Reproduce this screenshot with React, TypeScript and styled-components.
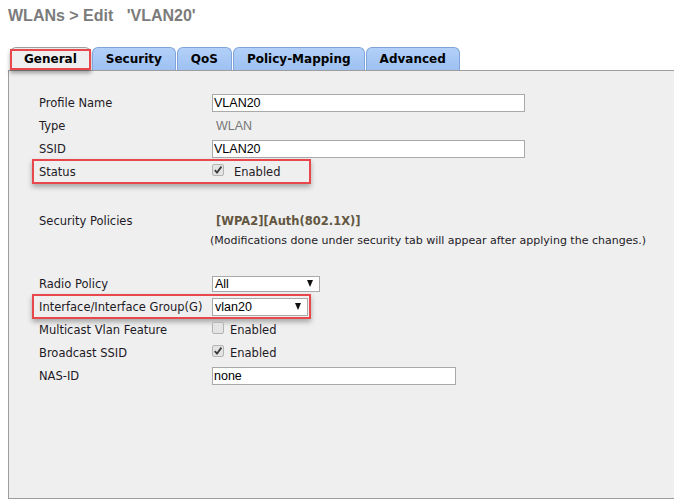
import React from 'react';
import styled, { createGlobalStyle, css } from 'styled-components';

const GlobalStyle = createGlobalStyle`
  html, body {
    margin: 0;
    padding: 0;
    background: #ffffff;
    overflow: hidden;
  }
  body {
    width: 674px;
    height: 500px;
    font-family: "DejaVu Sans", Verdana, sans-serif;
  }
`;

const Page = styled.div`
  box-sizing: border-box;
  height: 500px;
  padding: 6px 0 0 8px;
  display: flex;
  flex-direction: column;
`;

const Title = styled.h1`
  margin: 0;
  font: bold 16px/20px "Liberation Sans", Arial, sans-serif;
  color: #7b7b7b;
  white-space: pre;
`;

const TabBar = styled.div`
  display: flex;
  gap: 1px;
  height: 23px;
  margin: 21px 0 0 2px;
  position: relative;
  z-index: 1;
`;

const Tab = styled.div<{ $active?: boolean }>`
  position: relative;
  box-sizing: border-box;
  height: 23px;
  padding: 0 13px;
  border: 1px solid #7ea4da;
  border-bottom: none;
  border-radius: 6px 6px 0 0;
  background: linear-gradient(#b2d0f8, #9ec1f2);
  font: bold 12px/22px "DejaVu Sans", Verdana, sans-serif;
  color: #000;
  white-space: nowrap;
  ${(p) =>
    p.$active &&
    css`
      background: #efefef;
      border-color: #a0a0a0;
      &::after {
        content: '';
        position: absolute;
        left: -1px;
        right: -1px;
        top: 1px;
        bottom: 0;
        border: 2px solid #e8474b;
        box-shadow: 0 3px 4px rgba(0, 0, 0, 0.35);
        pointer-events: none;
      }
    `}
`;

const Panel = styled.div`
  box-sizing: border-box;
  flex: 1;
  margin-bottom: 1px;
  border: 1px solid #9d9d9d;
  border-right: none;
  background: #efefef;
  padding: 20px 0 0 30px;
`;

const Row = styled.div<{ $h?: number; $highlight?: boolean }>`
  position: relative;
  display: grid;
  grid-template-columns: 173px 1fr;
  align-items: center;
  height: ${(p) => p.$h ?? 23}px;
  ${(p) =>
    p.$highlight &&
    css`
      &::after {
        content: '';
        position: absolute;
        left: -7px;
        width: 279px;
        top: -1px;
        bottom: -1px;
        box-sizing: border-box;
        border: 2px solid #e8474b;
        box-shadow: 0 3px 5px rgba(0, 0, 0, 0.3);
        pointer-events: none;
      }
    `}
`;

const Spacer = styled.div<{ $h: number }>`
  height: ${(p) => p.$h}px;
`;

const Label = styled.span`
  font-size: 11.5px;
  color: #1e1a26;
  white-space: nowrap;
`;

const Value = styled.div`
  display: flex;
  align-items: center;
  white-space: nowrap;
`;

const TextInput = styled.input<{ $w: number }>`
  box-sizing: border-box;
  width: ${(p) => p.$w}px;
  height: 18px;
  margin: 0;
  padding: 0 1px;
  border: 1px solid #a9a9a9;
  border-radius: 0;
  background: #fff;
  font: 12.5px/16px "Liberation Sans", Arial, sans-serif;
  color: #000;
  outline: none;
`;

const PlainText = styled.span`
  margin-left: 4px;
  font: 12.5px "Liberation Sans", Arial, sans-serif;
  color: #777;
`;

const PolicyText = styled.span`
  margin-left: 4px;
  font-weight: bold;
  font-size: 11.5px;
  color: #625641;
`;

const Note = styled.span`
  margin-left: -2px;
  font-size: 11px;
  color: #1e1a26;
`;

const SelectBox = styled.div<{ $w: number; $h: number }>`
  box-sizing: border-box;
  display: flex;
  align-items: center;
  justify-content: space-between;
  width: ${(p) => p.$w}px;
  height: ${(p) => p.$h}px;
  padding: 0 6px 0 2px;
  border: 1px solid #a9a9a9;
  background: #fff;
  font: 12.5px "Liberation Sans", Arial, sans-serif;
  color: #000;
`;

const Arrow = styled.span`
  width: 0;
  height: 0;
  border-left: 3.5px solid transparent;
  border-right: 3.5px solid transparent;
  border-top: 7px solid #111;
`;

const CheckBox = styled.span`
  box-sizing: border-box;
  display: inline-flex;
  align-items: center;
  justify-content: center;
  width: 12px;
  height: 12px;
  border: 1px solid #b4b4b4;
  border-radius: 2px;
  background: #e4e4e4;
  margin-top: -4px;
`;

const CheckText = styled.span<{ $gap: number }>`
  margin-left: ${(p) => p.$gap}px;
  font-size: 11.5px;
  color: #1e1a26;
`;

const Check = ({ checked }: { checked: boolean }) => (
  <CheckBox>
    {checked && (
      <svg width="10" height="10" viewBox="0 0 10 10">
        <path d="M1.8 5.2 L4 7.6 L8.4 1.6" fill="none" stroke="#3a3a3a" strokeWidth="1.8" />
      </svg>
    )}
  </CheckBox>
);

const Select = ({ w, h, text }: { w: number; h: number; text: string }) => (
  <SelectBox $w={w} $h={h}>
    <span>{text}</span>
    <Arrow />
  </SelectBox>
);

const tabs = ['General', 'Security', 'QoS', 'Policy-Mapping', 'Advanced'];

export default function App() {
  return (
    <>
      <GlobalStyle />
      <Page>
        <Title>{"WLANs > Edit   'VLAN20'"}</Title>
        <TabBar>
          {tabs.map((t, i) => (
            <Tab key={t} $active={i === 0}>
              {t}
            </Tab>
          ))}
        </TabBar>
        <Panel>
          <Row>
            <Label>Profile Name</Label>
            <Value>
              <TextInput $w={313} value="VLAN20" readOnly />
            </Value>
          </Row>
          <Row>
            <Label>Type</Label>
            <Value>
              <PlainText>WLAN</PlainText>
            </Value>
          </Row>
          <Row>
            <Label>SSID</Label>
            <Value>
              <TextInput $w={313} value="VLAN20" readOnly />
            </Value>
          </Row>
          <Row $highlight>
            <Label>Status</Label>
            <Value>
              <Check checked />
              <CheckText $gap={10}>Enabled</CheckText>
            </Value>
          </Row>
          <Spacer $h={27} />
          <Row $h={21}>
            <Label>Security Policies</Label>
            <Value>
              <PolicyText>[WPA2][Auth(802.1X)]</PolicyText>
            </Value>
          </Row>
          <Row $h={19}>
            <span />
            <Value>
              <Note>(Modifications done under security tab will appear after applying the changes.)</Note>
            </Value>
          </Row>
          <Spacer $h={22} />
          <Row>
            <Label>Radio Policy</Label>
            <Value>
              <Select w={108} h={16} text="All" />
            </Value>
          </Row>
          <Row $highlight>
            <Label>Interface/Interface Group(G)</Label>
            <Value>
              <Select w={96} h={18} text="vlan20" />
            </Value>
          </Row>
          <Row>
            <Label>Multicast Vlan Feature</Label>
            <Value>
              <Check checked={false} />
              <CheckText $gap={6}>Enabled</CheckText>
            </Value>
          </Row>
          <Row>
            <Label>Broadcast SSID</Label>
            <Value>
              <Check checked />
              <CheckText $gap={6}>Enabled</CheckText>
            </Value>
          </Row>
          <Row>
            <Label>NAS-ID</Label>
            <Value>
              <TextInput $w={244} value="none" readOnly />
            </Value>
          </Row>
        </Panel>
      </Page>
    </>
  );
}
